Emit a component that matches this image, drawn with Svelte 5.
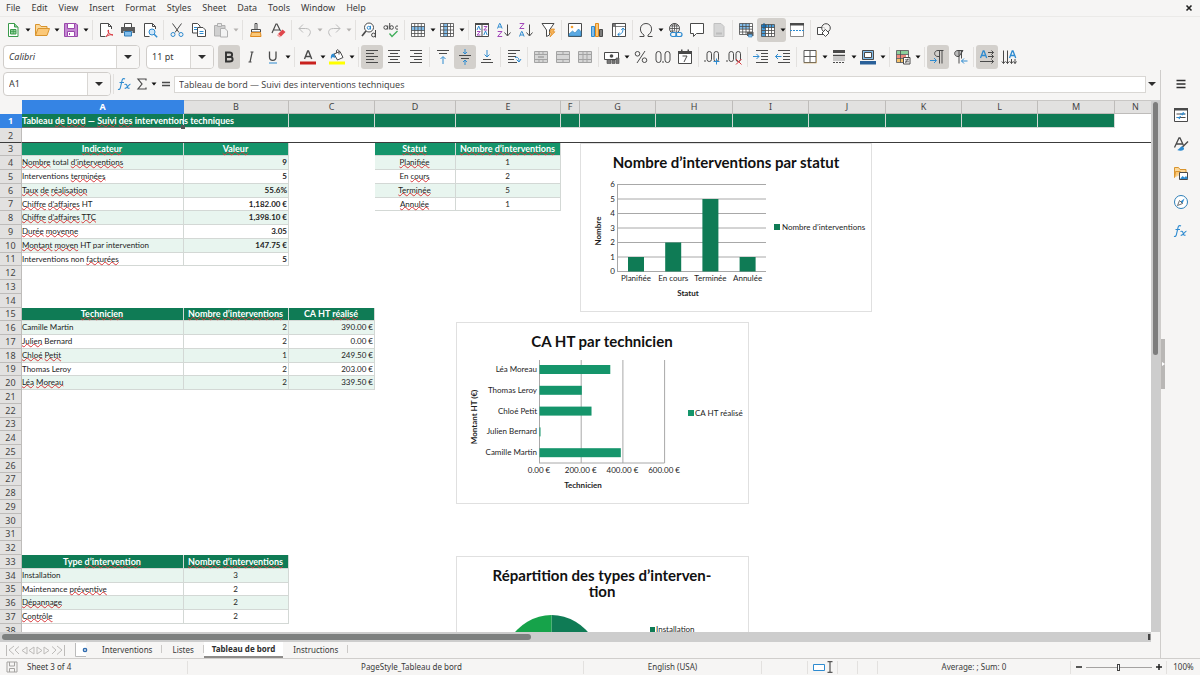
<script>
  const menus = ['File', 'Edit', 'View', 'Insert', 'Format', 'Styles', 'Sheet', 'Data', 'Tools', 'Window', 'Help'];

  const lines = (list) => list.map(([x, y, w]) => `<path d="M${x} ${y}h${w}" stroke="#4a4a4a"/>`).join('');
  const mergeBase = '<path d="M1.5 2.5h13v11h-13z" fill="#d6d6d6" stroke="#a3a3a3"/><path d="M1.5 5.5h13M1.5 10.5h13" stroke="#a3a3a3"/>';

  // inner markup of the 16x16 icons
  const icons = {
    new: '<path d="M3.5 1.5h6l3.500 3.500v9.500h-9.500z" fill="#fff" stroke="#3a9a4b"/><path d="M9.500 1.500v3.500h3.500" fill="#8fd19a" stroke="#3a9a4b"/><path d="M5.500 7.500h5.500v4.500h-5.500z" fill="#8fd19a" stroke="#3a9a4b"/><path d="M5.500 9.500h5.500M8.300 7.500v4.500" stroke="#3a9a4b" stroke-width=".7"/>',
    open: '<path d="M1.500 13.500v-11h4l1.500 2h6v2" fill="#fbd89a" stroke="#d9942d"/><path d="M1.500 13.500l2.500-7h11.500l-2.500 7z" fill="#fbc878" stroke="#d9942d"/>',
    save: '<path d="M1.500 1.500h11.500l1.500 1.500v11.500h-13z" fill="#c589d3" stroke="#9a48ab"/><path d="M4.500 1.500h7v5h-7z" fill="#fff" stroke="#9a48ab"/><path d="M4.500 9.500h7v5h-7z" fill="#fff" stroke="#9a48ab"/><path d="M6.500 11v2" stroke="#9a48ab"/>',
    pdf: '<path d="M13.500 7v-2.500l-3-3h-8v13h5" fill="#fff" stroke="#4a4a4a"/><path d="M10.500 1.500v3h3" fill="none" stroke="#4a4a4a"/><path d="M8 14.500c2-1 3-4.500 2.500-6.500-1.500 0 0 4.500 4.500 5-3-1-5 .5-7 1.500z" fill="none" stroke="#d9363e"/>',
    print: '<path d="M4.500 5v-3.500h7v3.500" fill="#fff" stroke="#4a4a4a"/><path d="M1 5h14v6h-2.500v-2h-9v2h-2.500z" fill="#5b5b5b"/><path d="M4.500 9.500h7v4.500h-7z" fill="#83beec" stroke="#2f7cb8"/>',
    preview: '<path d="M13.500 7v-2.500l-3-3h-8v13h5" fill="#fff" stroke="#4a4a4a"/><path d="M10.500 1.500v3h3" fill="none" stroke="#4a4a4a"/><circle cx="10" cy="10" r="3" fill="#cfe6f8" stroke="#2e8bd0"/><path d="M12.200 12.200l3 3" stroke="#2e8bd0" stroke-width="1.400"/>',
    cut: '<path d="M3.500 1.500l6.500 9M12.500 1.500l-6.500 9" stroke="#4a4a4a" fill="none"/><circle cx="4" cy="12.500" r="2" fill="none" stroke="#2e8bd0"/><circle cx="12" cy="12.500" r="2" fill="none" stroke="#2e8bd0"/>',
    copy: '<path d="M1.500 1.500h5l2.500 2.500v7h-7.500z" fill="#fff" stroke="#4a4a4a"/><path d="M6.500 5.500h5.500l2.500 2.500v6.500h-8z" fill="#fff" stroke="#4a4a4a"/><path d="M3 5.500h3M3 7.500h3M8.500 9.500h4M8.500 11.500h4" stroke="#2e8bd0"/>',
    paste: '<path d="M1.500 3.500h10.500v10.500h-10.500z" fill="#d0d0d0" stroke="#b0b0b0"/><path d="M4.500 1.500h4v3h-4z" fill="#e6e6e6" stroke="#b0b0b0"/><path d="M7.500 6.500h4.500l2.500 2.500v6h-7z" fill="#f3f3f3" stroke="#b0b0b0"/>',
    brush: '<path d="M7 1.500h2v6h-2z" fill="#fff" stroke="#4a4a4a"/><path d="M3.500 7.500h9v2.500h-9z" fill="#fff" stroke="#4a4a4a"/><path d="M3.500 10.500h9l.5 4h-10.500z" fill="#fbc878" stroke="#e08a1e"/>',
    clear: '<path d="M2 11l4-9h1l3.500 7M3.500 8h6" fill="none" stroke="#4a4a4a" stroke-width="1.200"/><path d="M8 12l4.500-4.500 3 2.500-4.500 4.500z" fill="#e0474c"/><path d="M8 12l3 2.800-1.200.7-2.800-2z" fill="#f3a0a2"/>',
    undo: '<path d="M2 6.500h6.500c6 0 6 5 2.500 8M2 6.500l4-4M2 6.500l4 4" fill="none" stroke="#bcbcbc"/>',
    redo: '<path d="M14 6.500h-6.500c-6 0-6 5-2.500 8M14 6.500l-4-4M14 6.500l-4 4" fill="none" stroke="#bcbcbc"/>',
    find: '<circle cx="8" cy="5.500" r="4.500" fill="#fff" stroke="#4a4a4a"/><path d="M5 9l-4 5" stroke="#4a4a4a" stroke-width="1.700"/><circle cx="7.700" cy="5.800" r="1.500" fill="none" stroke="#2e8bd0"/><path d="M9.500 3.800v3.700" stroke="#2e8bd0"/><circle cx="12.500" cy="13" r="1.900" fill="#f6f5f4" stroke="#4a4a4a"/><path d="M14.500 8v7.500" stroke="#4a4a4a"/>',
    spell: '<circle cx="2.700" cy="5.500" r="1.800" fill="none" stroke="#4a4a4a"/><path d="M4.700 3.500v4M6.700 1v6.500M15 4.200c-3.200-1.500-3.200 4.300 0 2.800" fill="none" stroke="#4a4a4a"/><circle cx="8.600" cy="5.500" r="1.800" fill="none" stroke="#4a4a4a"/><path d="M6.500 11.500l2.500 3 5.500-5.500" fill="none" stroke="#3fae59" stroke-width="1.300"/>',
    row: '<path d="M1.500 1.500h13v13h-13z" fill="#fff"/><path d="M1.500 4.500h13v4h-13z" fill="#83beec"/><path d="M1.500 1.500h13v13h-13zM1.500 4.500h13M1.500 8.500h13M1.500 11.500h13M4.700 1.500v13M8 1.500v13M11.300 1.500v13" fill="none" stroke="#4a4a4a" stroke-width=".8"/>',
    col: '<path d="M1.500 1.500h13v13h-13z" fill="#fff"/><path d="M4.700 1.500h4v13h-4z" fill="#83beec"/><path d="M1.500 1.500h13v13h-13zM1.500 4.500h13M1.500 8h13M1.500 11.500h13M4.700 1.500v13M8.500 1.500v13M11.500 1.500v13" fill="none" stroke="#4a4a4a" stroke-width=".8"/>',
    sort: '<path d="M1.500 1.500h13v13h-13z" fill="#fff" stroke="#4a4a4a"/><path d="M1 1h14v2h-14z" fill="#4a4a4a"/><path d="M8 2v12" stroke="#4a4a4a"/><path d="M3 8l1.700-4 1.700 4M9.800 13l1.700-4 1.700 4" fill="none" stroke="#2e8bd0"/><path d="M3 9.500h3.200l-3.200 3.500h3.400M9.800 4.500h3.200l-3.200 3.500h3.400" fill="none" stroke="#a347ba"/>',
    asc: '<path d="M1.500 6.500l2-5h.6l2 5M2.300 5h3" fill="none" stroke="#2e8bd0"/><path d="M1.700 9.500h4.300l-4.300 5h4.500" fill="none" stroke="#a347ba"/><path d="M11.500 2.500v11M8.500 10.500l3 3.500 3-3.500" fill="none" stroke="#4a4a4a"/>',
    desc: '<path d="M1.700 1.500h4.300l-4.300 5h4.500" fill="none" stroke="#a347ba"/><path d="M1.500 14.500l2-5h.6l2 5M2.300 13h3" fill="none" stroke="#2e8bd0"/><path d="M11.500 2.500v11M8.500 10.500l3 3.500 3-3.500" fill="none" stroke="#4a4a4a"/>',
    filter: '<path d="M2 1.500h12l-4.500 6.500v5l-3 1.500v-6.500z" fill="#fff" stroke="#4a4a4a"/><path d="M11 7h3.500l-1.500 2.800h2l-5 5.200 1.500-4h-1.800z" fill="#f7b45a" stroke="#e08a1e" stroke-width=".7"/>',
    image: '<path d="M1.500 1.500h13v13h-13z" fill="#fff" stroke="#4a4a4a"/><path d="M2 14v-2l3.500-3 2.500 2 3.500-4 2.500 2.500v4.500z" fill="#5aa9e3" stroke="#2e7fb8" stroke-width=".6"/><circle cx="5" cy="5" r="1.300" fill="#f59f2f"/>',
    chart: '<path d="M2.500 4.500h3v10h-3z" fill="#83beec" stroke="#2e8bd0"/><path d="M6.500 1.500h3v13h-3z" fill="#fbc878" stroke="#e08a1e"/><path d="M10.500 7.500h3v7h-3z" fill="#7d7d7d" stroke="#4a4a4a"/>',
    pivot: '<path d="M1.500 1.500h13v13h-13z" fill="#fff" stroke="#4a4a4a"/><path d="M4.500 2v12M2 4.500h12" stroke="#4a4a4a" stroke-width=".7"/><path d="M1.800 1.800h2.500v2.500h-2.500z" fill="#777"/><path d="M7 12.500c4 0 5-2.500 5-6M10.300 8l1.700-2 1.800 2M8.700 10.800l-2 1.700 2 1.700" fill="none" stroke="#2e8bd0"/>',
    omega: '<path d="M1.500 14.500h4.500v-1.500c-5.500-3-4.500-11.500 2-11.500s7.500 8.500 2 11.500v1.500h4.500" fill="none" stroke="#4a4a4a"/>',
    link: '<circle cx="7.500" cy="6.500" r="5" fill="#fff" stroke="#4a4a4a"/><ellipse cx="7.500" cy="6.500" rx="2.300" ry="5" fill="none" stroke="#4a4a4a" stroke-width=".8"/><path d="M2.500 6.500h10M3.500 4h8M3.500 9h5M7.500 1.500v7" stroke="#4a4a4a" stroke-width=".8"/><rect x="3.500" y="10.500" width="6" height="4" rx="2" fill="#f6f5f4" stroke="#2e8bd0" stroke-width="1.200"/><rect x="9" y="10.500" width="6" height="4" rx="2" fill="none" stroke="#2e8bd0" stroke-width="1.200"/>',
    comment: '<path d="M1.500 1.500h13v10h-7l-3 3v-3h-3z" fill="#fff" stroke="#4a4a4a"/>',
    header: '<path d="M3 1.500h7l3 3v10h-10z" fill="#d6d6d6" stroke="#c0c0c0"/><path d="M5 11.500h6" stroke="#bdbdbd" stroke-width="2"/>',
    printArea: '<path d="M1.500 1.500h13v11h-13z" fill="#fff"/><path d="M1.500 1.500h10v5.500h-10z" fill="#83beec"/><path d="M1.500 1.500h13v11h-13zM1.500 4.500h13M1.500 7.200h13M1.500 10h13M4.700 1.500v11M8 1.500v11M11.300 1.500v11" fill="none" stroke="#4a4a4a" stroke-width=".8"/><path d="M9 10h6.500v4h-6.500z" fill="#5b5b5b"/><path d="M10.500 12.500h3.500v2.500h-3.500z" fill="#83beec" stroke="#2f7cb8" stroke-width=".6"/>',
    freeze: '<path d="M1.500 2.500h13v12h-13z" fill="#fff"/><path d="M1.500 2.500h13v3h-13zM1.500 2.500h4v12h-4z" fill="#4b9fdc"/><path d="M1.500 2.500h13v12h-13zM1.500 5.500h13M1.500 8.500h13M1.500 11.500h13M5.500 2.500v12M8.500 2.500v12M11.500 2.500v12" fill="none" stroke="#4a4a4a" stroke-width=".8"/><path d="M1 4h6M4 1v6" stroke="#0b5a9a"/>',
    split: '<path d="M1.500 1.500h13v13h-13z" fill="#fff" stroke="#8a8a8a"/><path d="M1 1h14v2.500h-14z" fill="#4a4a4a"/><path d="M1 8.500h14" stroke="#2e8bd0" stroke-dasharray="2 1"/>',
    shapes: '<path d="M1.500 5.500h7v7h-7z" fill="#fff" stroke="#4a4a4a"/><circle cx="10" cy="6" r="4.300" fill="#f6f5f4" fill-opacity=".8" stroke="#4a4a4a"/><path d="M9.500 7.500l3.500 3.500-3.500 3.500-3.500-3.500z" fill="#fff" stroke="#4a4a4a"/>',
    bold: '<path d="M5 3.500h3.500c3.500 0 3.500 4.300 0 4.300 4.200 0 4.200 4.700 0 4.700h-3.500zM5 8h4" fill="none" stroke="#333" stroke-width="1.900"/>',
    italic: '<path d="M7.500 3h3M5.500 13h3M9.200 3l-2.200 10" fill="none" stroke="#4a4a4a" stroke-width="1.200"/>',
    underline: '<path d="M4.500 2.500v5.500c0 4.500 6.500 4.500 6.500 0v-5.500" fill="none" stroke="#4a4a4a" stroke-width="1.300"/><path d="M4 14h8" stroke="#2e8bd0"/>',
    fontColor: '<path d="M4.500 10l3.200-8h.8l3.200 8M5.700 7.500h5" fill="none" stroke="#4a4a4a" stroke-width="1.400"/><path d="M0 12.500h16v3h-16z" fill="#c9211e"/>',
    fill: '<path d="M5 5l6-2.500 3 6-5.500 2.500z" fill="#fff" stroke="#4a4a4a"/><path d="M7.500 4v-2.500c1-1.500 2.500-.5 2.500 1v3" fill="none" stroke="#4a4a4a"/><path d="M5 4.500c-3 0-3.500 3-3 5.500l1.500-2 3 1z" fill="#2e8bd0"/><path d="M0 12.500h16v3h-16z" fill="#ffff00"/>',
    left: lines([[2, 1.5, 12], [2, 4.5, 8], [2, 7.5, 12], [2, 10.5, 8], [2, 13.5, 12]]),
    center: lines([[2, 1.5, 12], [4, 4.5, 8], [2, 7.5, 12], [4, 10.5, 8], [2, 13.5, 12]]),
    right: lines([[2, 1.5, 12], [6, 4.5, 8], [2, 7.5, 12], [6, 10.5, 8], [2, 13.5, 12]]),
    top: lines([[2, 1.5, 12], [4, 4.5, 8]]) + '<path d="M8 15v-7M5.500 10l2.500-2.500 2.500 2.500" fill="none" stroke="#2e8bd0"/>',
    middle: lines([[2, 6.5, 12], [4, 9.5, 8]]) + '<path d="M8 0v4.500M6 3l2 2 2-2M8 16v-4.500M6 13l2-2 2 2" fill="none" stroke="#2e8bd0"/>',
    bottom: lines([[2, 13.5, 12], [4, 10.5, 8]]) + '<path d="M8 1v7M5.500 5.500l2.500 2.500 2.500-2.500" fill="none" stroke="#2e8bd0"/>',
    wrap: lines([[2, 1.5, 12], [2, 4.5, 8], [2, 7.5, 8], [2, 10.5, 6], [2, 13.5, 9]]) + '<path d="M9 8.500c3-1 4 1 4 4M10.500 10.500l2.500 2.500 2-3" fill="none" stroke="#2e8bd0"/>',
    merge: mergeBase + '<path d="M6 2.500v3M10 2.500v3M6 10.500v3M10 10.500v3" stroke="#a3a3a3"/><path d="M5 8h6" stroke="#888"/>',
    mergeCells: mergeBase + '<path d="M8 2.500v3M8 10.500v3" stroke="#a3a3a3"/>',
    unmerge: mergeBase + '<path d="M6 2.500v11M10 2.500v11" stroke="#a3a3a3"/>',
    currency: '<path d="M.5 3.500h14v7h-14z" fill="#fff" stroke="#4a4a4a"/><circle cx="7.500" cy="7" r="1.800" fill="#4a4a4a"/><path d="M3 10.500h4v4h-4zM8 11h3v3.500h-3zM12 9h3v5.500h-3z" fill="#777" stroke="#4a4a4a" stroke-width=".6"/>',
    percent: '<circle cx="4.500" cy="4.800" r="2.300" fill="none" stroke="#4a4a4a"/><circle cx="11.500" cy="11.200" r="2.300" fill="none" stroke="#4a4a4a"/><path d="M12 2l-8 12" stroke="#4a4a4a"/>',
    decimal: '<rect x="1" y="2.500" width="5" height="11" rx="2.500" fill="none" stroke="#4a4a4a"/><rect x="10" y="2.500" width="5" height="11" rx="2.500" fill="none" stroke="#4a4a4a"/><path d="M8 12v2" stroke="#4a4a4a"/>',
    date: '<path d="M1.500 2.500h13v12h-13z" fill="#fff" stroke="#4a4a4a"/><path d="M1 2h14v3h-14zM4 .5h1.500v2h-1.500zM10.500 .5h1.500v2h-1.500z" fill="#4a4a4a"/><path d="M5.500 7h4.500l-3 6" fill="none" stroke="#4a4a4a"/>',
    addDec: '<rect x="3" y="2.500" width="4.500" height="10" rx="2.200" fill="none" stroke="#4a4a4a"/><rect x="10" y="2.500" width="4.500" height="10" rx="2.200" fill="none" stroke="#4a4a4a"/><path d="M1 11v2" stroke="#4a4a4a"/><path d="M12.500 9.500v6M9.500 12.500h6" stroke="#2e8bd0"/>',
    delDec: '<rect x="3" y="2.500" width="4.500" height="10" rx="2.200" fill="none" stroke="#4a4a4a"/><rect x="10" y="2.500" width="4.500" height="10" rx="2.200" fill="none" stroke="#4a4a4a"/><path d="M1 11v2" stroke="#4a4a4a"/><path d="M10 10l5.500 5.500M15.500 10l-5.500 5.500" stroke="#d9363e"/>',
    indent: lines([[3, 1.5, 12], [8, 4.5, 7], [8, 7.5, 7], [8, 10.5, 7], [3, 13.5, 12]]) + '<path d="M0 7.500h6M3.500 5l2.500 2.500-2.500 2.500" fill="none" stroke="#2e8bd0"/>',
    outdent: lines([[3, 1.5, 12], [8, 4.5, 7], [8, 7.5, 7], [8, 10.5, 7], [3, 13.5, 12]]) + '<path d="M.5 7.500h6M3 5l-2.500 2.500 2.500 2.500" fill="none" stroke="#2e8bd0"/>',
    borders: '<path d="M2 1.500h12v12h-12zM8 1.500v12M2 7.500h12" fill="#fff" stroke="#5a5a5a"/><path d="M1.500 14h13v-12.500" fill="none" stroke="#caa25c" stroke-width=".6"/>',
    lineStyle: '<path d="M2 1h12v3h-12z" fill="#4a4a4a"/><path d="M2 6.500h12" stroke="#4a4a4a" stroke-width="1.500"/><path d="M2 9h12M2 11h12" stroke="#9a9a9a"/><path d="M2 13.500h12" stroke="#4a4a4a" stroke-dasharray="2 1"/>',
    lineColor: '<path d="M2.500 1.500h11v9h-11z" fill="#83beec" stroke="#4a4a4a"/><path d="M4.500 3.500h7v5h-7z" fill="#fff" stroke="#4a4a4a"/><path d="M0 12h16v3.500h-16z" fill="#2a6099"/>',
    cond: '<path d="M1.500 1.500h12v12h-12z" fill="#fff" stroke="#4a4a4a" stroke-width=".8"/><path d="M2 2h11v3h-11z" fill="#8ccf9c"/><path d="M2 6h9v3h-9z" fill="#ee8a7e"/><path d="M2 10h6v3h-6z" fill="#f5c26b"/><path d="M5.500 1.500v12M1.500 5.500h12M1.500 9.500h7" stroke="#4a4a4a" stroke-width=".8"/><path d="M8.500 8.500h6.500v6.500h-6.500z" fill="#fff" stroke="#4a4a4a"/><path d="M10 10.800h4M10 12.800h4M13 9.500l-2.500 4.500" stroke="#4a4a4a" stroke-width=".8"/>',
    ltr: '<path d="M13.500 1.500h-5.500c-4.500 0-4.500 6 0 6h1M9.500 1.500v13M12 1.500v13" fill="none" stroke="#4a4a4a"/><path d="M0 11.500h6M4 9l2.500 2.500-2.500 2.500" fill="none" stroke="#2e8bd0"/>',
    rtl: '<path d="M11 1.500h-5c-4.500 0-4.500 6 0 6h1z" fill="#bbb" stroke="#4a4a4a"/><path d="M7 1.500v13M9.500 1.500v8" fill="none" stroke="#4a4a4a"/><path d="M9.500 12h6M12 9.500l-2.500 2.500 2.500 2.500" fill="none" stroke="#2e8bd0"/>',
    textLtr: '<path d="M1.500 9l2.700-7h.8l2.700 7M2.500 6.500h4.200" fill="none" stroke="#2e8bd0" stroke-width="1.300"/><path d="M9 3.500h5.500M9 7.500h5.500M1 12.500h13.500M12.500 1.500l2 2-2 2M12.500 5.500l2 2-2 2M12.500 10.500l2 2-2 2" fill="none" stroke="#4a4a4a"/>',
    textTtb: '<path d="M8.500 9l2.700-7h.8l2.700 7M9.500 6.500h4.200" fill="none" stroke="#2e8bd0" stroke-width="1.300"/><path d="M2.500 1.500v13M6.500 1.500v13M10.500 10v4.500M14 10v4.500M.8 12.500l1.700 2 1.700-2M4.800 12.500l1.700 2 1.700-2M9 12.500l1.500 2 1.500-2M12.500 12.500l1.500 2 1.500-2" fill="none" stroke="#4a4a4a"/>',
    fx: '<path d="M8 3c-1.500-1-2.600 0-3 1.600l-1.600 7c-.4 1.600-1.100 2.200-2.400 1.700M2.500 6.500h4.500" fill="none" stroke="#2e8bd0" stroke-width="1.100"/><path d="M7.500 8.500c1.700-.8 2.200 0 2.600 1.700s1 2.500 2.400 1.700M13.500 8.300c-1.700-.5-3.200 4.600-5.800 4" fill="none" stroke="#2e8bd0" stroke-width="1.100"/>',
    sigma: '<path d="M12 4.500v-1.500h-8l4 5-4 5h8v-1.500" fill="none" stroke="#4a4a4a" stroke-width="1.200"/>',
    equals: '<path d="M4 6.500h8M4 9.500h8" stroke="#4a4a4a" stroke-width="1.500"/>',
    burger: '<path d="M3.500 4.500h9M3.500 8h9M3.500 11.500h9" stroke="#2e2e2e" stroke-width="1.400"/>',
    properties: '<path d="M1.500 1.500h13v13h-13z" fill="#fff" stroke="#4a4a4a"/><path d="M1 1h14v2.500h-14z" fill="#4a4a4a"/><path d="M3.500 7h9M3.500 10.500h9" stroke="#4a4a4a"/><path d="M10.500 5.300l-1.500 3M7.500 9l-1.500 3M7 7h5M4 10.500h3" stroke="#2e8bd0" stroke-width="1.200"/>',
    styles: '<path d="M1.500 11.500l4.500-9.500h1l3.500 7.500M3.500 8h6" fill="none" stroke="#4a4a4a" stroke-width="1.300"/><path d="M15 5.500l-6.500 6.500" stroke="#4a4a4a" stroke-width="1.500"/><path d="M9.500 10.500c-2.500-.5-2.500 2.500-5.500 3.500 4 1.500 7.500.5 7-2z" fill="#2e8bd0"/>',
    gallery: '<path d="M1.500 12.500v-10h4l1.500 2h6v3" fill="#fbd89a" stroke="#d9942d"/><path d="M1.500 12.500l1-6h5" fill="#fbc878" stroke="#d9942d"/><path d="M6.500 7.500h8v7h-8z" fill="#fff" stroke="#4a4a4a"/><path d="M7 14l2.500-3 2 1.500 1.500-1.500 1.500 2v1z" fill="#2e8bd0"/>',
    navigator: '<circle cx="8" cy="8" r="6.500" fill="#fff" stroke="#2e7fb8"/><path d="M11.500 4.500l-2 5-2-2z" fill="#2e8bd0"/><path d="M4.500 11.500l2-5 3 3z" fill="#fff" stroke="#4a4a4a" stroke-width=".8"/>'
  };

  // '|' is a separator; arrow adds the drop-down half of a split button
  const standardBar = [
    { icon: 'new', label: 'New', arrow: true }, { icon: 'open', label: 'Open', arrow: true }, { icon: 'save', label: 'Save', arrow: true }, '|',
    { icon: 'pdf', label: 'Export as PDF' }, { icon: 'print', label: 'Print' }, { icon: 'preview', label: 'Print Preview' }, '|',
    { icon: 'cut', label: 'Cut' }, { icon: 'copy', label: 'Copy' }, { icon: 'paste', label: 'Paste', arrow: true, off: true }, '|',
    { icon: 'brush', label: 'Clone Formatting' }, { icon: 'clear', label: 'Clear Formatting' }, '|',
    { icon: 'undo', label: 'Undo', arrow: true, off: true }, { icon: 'redo', label: 'Redo', arrow: true, off: true }, '|',
    { icon: 'find', label: 'Find and Replace' }, { icon: 'spell', label: 'Spelling' }, '|',
    { icon: 'row', label: 'Row', arrow: true }, { icon: 'col', label: 'Column', arrow: true }, '|',
    { icon: 'sort', label: 'Sort' }, { icon: 'asc', label: 'Sort Ascending' }, { icon: 'desc', label: 'Sort Descending' }, { icon: 'filter', label: 'AutoFilter' }, '|',
    { icon: 'image', label: 'Insert Image' }, { icon: 'chart', label: 'Insert Chart' }, { icon: 'pivot', label: 'Pivot Table' }, '|',
    { icon: 'omega', label: 'Special Character', arrow: true }, { icon: 'link', label: 'Insert Hyperlink' }, { icon: 'comment', label: 'Insert Comment' }, { icon: 'header', label: 'Headers and Footers', off: true }, '|',
    { icon: 'printArea', label: 'Define Print Area' }, { icon: 'freeze', label: 'Freeze Rows and Columns', arrow: true, on: true }, { icon: 'split', label: 'Split Window' }, '|',
    { icon: 'shapes', label: 'Draw Functions' }
  ];

  const formatBar = [
    { icon: 'bold', label: 'Bold', on: true }, { icon: 'italic', label: 'Italic' }, { icon: 'underline', label: 'Underline', arrow: true }, '|',
    { icon: 'fontColor', label: 'Font Color', arrow: true }, { icon: 'fill', label: 'Background Color', arrow: true }, '|',
    { icon: 'left', label: 'Align Left', on: true }, { icon: 'center', label: 'Center Horizontally' }, { icon: 'right', label: 'Align Right' }, '|',
    { icon: 'top', label: 'Align Top' }, { icon: 'middle', label: 'Center Vertically', on: true }, { icon: 'bottom', label: 'Align Bottom' }, '|',
    { icon: 'wrap', label: 'Wrap Text' }, '|',
    { icon: 'merge', label: 'Merge and Center', off: true }, { icon: 'mergeCells', label: 'Merge Cells', off: true }, { icon: 'unmerge', label: 'Unmerge Cells', off: true }, '|',
    { icon: 'currency', label: 'Format as Currency', arrow: true }, { icon: 'percent', label: 'Format as Percent' }, { icon: 'decimal', label: 'Format as Number' }, { icon: 'date', label: 'Format as Date' }, '|',
    { icon: 'addDec', label: 'Add Decimal Place' }, { icon: 'delDec', label: 'Delete Decimal Place' }, '|',
    { icon: 'indent', label: 'Increase Indent' }, { icon: 'outdent', label: 'Decrease Indent' }, '|',
    { icon: 'borders', label: 'Borders', arrow: true }, { icon: 'lineStyle', label: 'Border Style', arrow: true }, { icon: 'lineColor', label: 'Border Color', arrow: true }, '|',
    { icon: 'cond', label: 'Conditional Formatting', arrow: true }, '|',
    { icon: 'ltr', label: 'Left-To-Right', on: true }, { icon: 'rtl', label: 'Right-To-Left' }, '|',
    { icon: 'textLtr', label: 'Text left to right', on: true }, { icon: 'textTtb', label: 'Text top to bottom' }
  ];

  const sidebar = [
    { icon: 'burger', label: 'Sidebar Settings' }, { icon: 'properties', label: 'Properties' }, { icon: 'styles', label: 'Styles' },
    { icon: 'gallery', label: 'Gallery' }, { icon: 'navigator', label: 'Navigator' }, { icon: 'fx', label: 'Functions' }
  ];

  const columns = [
    ['A', 162], ['B', 105], ['C', 86], ['D', 81], ['E', 105], ['F', 19], ['G', 76], ['H', 77],
    ['I', 76], ['J', 77], ['K', 76], ['L', 76], ['M', 77], ['N', 0]
  ];
  const rowNumbers = Array.from({ length: 38 }, (_, i) => i + 1);

  // words in [brackets] get the spell-check wave
  const blocks = [
    {
      row: 3, cols: 'AB', tone: 'mid', align: ['', 'end strong'],
      head: ['[Indicateur]', '[Valeur]'],
      rows: [
        ['[Nombre] total [d’interventions]', '9'],
        ['Interventions [terminées]', '5'],
        ['[Taux] [de] [réalisation]', '55.6%'],
        ['[Chiffre] [d’affaires] HT', '1,182.00 €'],
        ['[Chiffre] [d’affaires] [TTC]', '1,398.10 €'],
        ['[Durée] [moyenne]', '3.05'],
        ['[Montant] [moyen] HT par intervention', '147.75 €'],
        ['Interventions non [facturées]', '5']
      ]
    },
    {
      row: 3, cols: 'DE', tone: 'mid', align: ['mid-text', 'mid-text'],
      head: ['[Statut]', '[Nombre] [d’interventions]'],
      rows: [['[Planifiée]', '1'], ['En [cours]', '2'], ['[Terminée]', '5'], ['[Annulée]', '1']]
    },
    {
      row: 15, cols: 'ABC', tone: 'dark', align: ['', 'end', 'end'],
      head: ['[Technicien]', '[Nombre] [d’interventions]', 'CA HT [réalisé]'],
      rows: [
        ['Camille Martin', '2', '390.00 €'],
        ['[Julien] Bernard', '2', '0.00 €'],
        ['[Chloé] [Petit]', '1', '249.50 €'],
        ['Thomas Leroy', '2', '203.00 €'],
        ['[Léa] [Moreau]', '2', '339.50 €']
      ]
    },
    {
      row: 33, cols: 'AB', tone: 'dark', align: ['', 'mid-text'],
      head: ['Type [d’intervention]', '[Nombre] [d’interventions]'],
      rows: [['Installation', '3'], ['Maintenance [préventive]', '2'], ['[Dépannage]', '2'], ['[Contrôle]', '2']]
    }
  ];

  const cells = {};
  for (const [col] of columns) {
    if (col !== 'N') cells[col + 1] = { text: '', cls: 'filled dark' };
  }
  cells.A1 = { text: 'Tableau [de] [bord] — [Suivi] [des] interventions techniques', cls: 'filled dark current' };
  for (const b of blocks) {
    b.cols.split('').forEach((col, c) => {
      cells[col + b.row] = { text: b.head[c], cls: `filled head ${b.tone}` };
      b.rows.forEach((r, i) => {
        cells[col + (b.row + 1 + i)] = { text: r[c], cls: `filled ${i % 2 ? '' : 'stripe'} ${b.align[c]}` };
      });
    });
  }

  const words = (text) => text.split(/(\[[^\]]+\])/).filter(Boolean);

  const statuts = [['Planifiée', 1], ['En cours', 2], ['Terminée', 5], ['Annulée', 1]];
  const techniciens = [['Léa Moreau', 339.5], ['Thomas Leroy', 203], ['Chloé Petit', 249.5], ['Julien Bernard', 0], ['Camille Martin', 390]];

  const tabs = ['Interventions', 'Listes', 'Tableau de bord', 'Instructions'];
  let activeTab = $state('Tableau de bord');
  let zoom = $state(100);
</script>

{#snippet icon(name)}
  <svg class="icon" viewBox="0 0 16 16" fill="none" aria-hidden="true">{@html icons[name]}</svg>
{/snippet}

{#snippet caret()}
  <svg class="caret" viewBox="0 0 6 4" aria-hidden="true"><path d="M0.500 0.500h5l-2.500 3z" fill="currentColor" /></svg>
{/snippet}

{#snippet bar(items)}
  {#each items as item}
    {#if item === '|'}
      <span class="sep"></span>
    {:else}
      <span class="tool" class:on={item.on} class:split={item.arrow}>
        <button class="tool-btn" aria-label={item.label} disabled={item.off}>{@render icon(item.icon)}</button>
        {#if item.arrow}
          <button class="arrow-btn" aria-label="{item.label} options" disabled={item.off}>{@render caret()}</button>
        {/if}
      </span>
    {/if}
  {/each}
{/snippet}

<div class="window">
  <nav class="menubar">
    {#each menus as menu}
      <button>{menu}</button>
    {/each}
    <button class="close" aria-label="Close document">
      <svg viewBox="0 0 8 8" aria-hidden="true"><path d="M1.500 1.500l5 5M6.500 1.500l-5 5" stroke="#222" stroke-width="1.600" /></svg>
    </button>
  </nav>

  <div class="toolbar">{@render bar(standardBar)}</div>

  <div class="toolbar">
    <div class="combo font-name">
      <input aria-label="Font name" value="Calibri" />
      <button aria-label="Font list"><i></i></button>
    </div>
    <div class="combo font-size">
      <input aria-label="Font size" value="11 pt" />
      <button aria-label="Size list"><i></i></button>
    </div>
    {@render bar(formatBar)}
  </div>

  <div class="body">
    <div class="editor">
      <div class="formula">
        <div class="combo name-box">
          <input aria-label="Name box" value="A1" />
          <button aria-label="Named ranges"><i></i></button>
        </div>
        <span class="sep"></span>
        <button class="fn" aria-label="Function Wizard">{@render icon('fx')}</button>
        <button class="fn" aria-label="Sum">{@render icon('sigma')}</button>
        <button class="arrow-btn" aria-label="Select Function">{@render caret()}</button>
        <button class="fn" aria-label="Formula">{@render icon('equals')}</button>
        <input class="formula-input" aria-label="Input line" value="Tableau de bord — Suivi des interventions techniques" />
        <button class="expand" aria-label="Expand formula bar"><i></i></button>
      </div>

      <div class="sheet-row">
        <div class="sheet">
          <table>
            <colgroup>
              <col style="width: 22px" />
              {#each columns as [name, width]}
                <col style={width ? `width: ${width}px` : ''} />
              {/each}
            </colgroup>
            <thead>
              <tr>
                <td class="corner"></td>
                {#each columns as [name]}
                  <th scope="col" class:selected={name === 'A'}>{name}</th>
                {/each}
              </tr>
            </thead>
            <tbody>
              {#each rowNumbers as n}
                <tr class:short={n % 4 === 3} class:frozen={n === 2}>
                  <th scope="row" class:selected={n === 1}>{n}</th>
                  {#each columns as [name]}
                    {@const cell = cells[name + n]}
                    <td class={cell?.cls}>{#if cell}{#each words(cell.text) as w}{#if w[0] === '['}<span class="wave">{w.slice(1, -1)}</span>{:else}{w}{/if}{/each}{/if}{#if name + n === 'A1'}<span class="cursor"></span>{/if}</td>
                  {/each}
                </tr>
              {/each}
            </tbody>
          </table>

          <svg class="chart by-status" viewBox="0 0 292 169">
            <text class="title" x="146" y="25">Nombre d’interventions par statut</text>
            {#each [0, 1, 2, 3, 4, 5, 6] as v}
              <path class="grid" d="M37 {128.5 - v * 14.5}h149" />
              <text class="right-text" x="35" y={131 - v * 14.5}>{v}</text>
            {/each}
            <path class="grid" d="M37.500 41.500v87" />
            {#each statuts as [name, count], i}
              <rect x={48 + i * 37.2} y={128.5 - count * 14.5} width="16" height={count * 14.5} fill="#0f7b55" />
              <text class="middle" x={56 + i * 37.2} y="138">{name}</text>
            {/each}
            <text class="axis" x="108" y="153">Statut</text>
            <text class="axis" transform="translate(21 88) rotate(-90)">Nombre</text>
            <rect x="194" y="81" width="6" height="6" fill="#0f7b55" />
            <text x="202" y="87">Nombre d’interventions</text>
          </svg>

          <svg class="chart by-tech" viewBox="0 0 293 182">
            <text class="title" x="146" y="25">CA HT par technicien</text>
            {#each ['0.00 €', '200.00 €', '400.00 €', '600.00 €'] as label, i}
              <path class="grid" d="M{83.5 + i * 41.7} 38v103" />
              <text class="middle" x={83 + i * 41.7} y="151">{label}</text>
            {/each}
            <path class="grid" d="M83 141h125.500" />
            {#each techniciens as [name, amount], i}
              <rect x="83.500" y={43 + i * 20.8} width={Math.max(amount * 0.2085, 1)} height="9" fill="#15956b" />
              <text class="right-text" x="81" y={50 + i * 20.8}>{name}</text>
            {/each}
            <text class="axis" x="127" y="166">Technicien</text>
            <text class="axis" transform="translate(21 95) rotate(-90)">Montant HT (€)</text>
            <rect x="232" y="88" width="6" height="6" fill="#15956b" />
            <text x="239" y="94">CA HT réalisé</text>
          </svg>

          <svg class="chart by-type" viewBox="0 0 293 182">
            <text class="title" x="146" y="25">Répartition des types d’interven-</text>
            <text class="title" x="146" y="41">tion</text>
            <path d="M95.500 108v-49a49 49 0 0 1 42 73z" fill="#0f7b55" />
            <path d="M95.500 108v-49a49 49 0 0 0-42 73z" fill="#16a34a" />
            <rect x="194" y="71" width="5" height="5" fill="#0f7b55" />
            <text x="200" y="76">Installation</text>
          </svg>
        </div>
        <div class="vscroll"><div class="thumb"></div></div>
      </div>

      <div class="hscroll"><div class="thumb"></div><span class="grip"></span></div>

      <div class="tabbar">
        <svg class="tab-nav" viewBox="0 0 60 12" fill="none" stroke="#bdbbb9" aria-hidden="true">
          <path d="M.5 1v11M8 2l-5 4 5 4.500M13 2.500l-4 3.500 4 4M21 3l-5 3.500 5 3.500zM28 3l-5 3.500 5 3.500zM31 3l5 3.500-5 3.500zM38 3l5 3.500-5 3.500zM46 2.500l4 3.500-4 4M51 2l5 4-5 4.500M58.500 1v11" />
        </svg>
        <button class="add" aria-label="Add sheet">
          <svg viewBox="0 0 14 14" aria-hidden="true"><path d="M.5 0v13.500h10.500" fill="#fff" stroke="#bbb" /><path d="M1 0h10v13h-10z" fill="#fff" /><circle cx="10" cy="7" r="2.300" fill="#1e5fa8" /><path d="M8.800 7h2.400M10 5.800v2.400" stroke="#fff" stroke-width=".8" /></svg>
        </button>
        {#each tabs as tab}
          <button class="tab" class:active={tab === activeTab} onclick={() => (activeTab = tab)}>{tab}</button>
        {/each}
      </div>
    </div>

    <aside class="sidebar">
      <span class="handle"></span>
      {#each sidebar as item}
        <button aria-label={item.label}>{@render icon(item.icon)}</button>
      {/each}
    </aside>
  </div>

  <footer class="status">
    <span class="doc">
      <svg viewBox="0 0 12 12" fill="none" stroke="#a5a3a1" aria-hidden="true"><path d="M1 1h10v10h-10zM3.500 1v4h5v-4M3.500 11v-3.500h5v3.500" /></svg>
      Sheet 3 of 4
    </span>
    <span class="page-style">PageStyle_Tableau de bord</span>
    <span class="lang">English (USA)</span>
    <span class="selection"></span>
    <span class="modes">
      <svg viewBox="0 0 20 12" fill="none" aria-hidden="true"><path d="M.5 3.500h11v6h-11z" stroke="#2e8bd0" fill="#fff" /><path d="M17 1v10M14.500 .7h5M14.500 11.300h5" stroke="#333" /></svg>
    </span>
    <span class="slot"></span>
    <span class="slot"></span>
    <span class="sum">Average: ; Sum: 0</span>
    <span class="zoom">
      <button aria-label="Zoom out"><svg viewBox="0 0 8 8" aria-hidden="true"><path d="M1 4h6" stroke="#222" stroke-width="1.500" /></svg></button>
      <input type="range" min="0" max="200" aria-label="Zoom" bind:value={zoom} />
      <button aria-label="Zoom in"><svg viewBox="0 0 8 8" aria-hidden="true"><path d="M1 4h6M4 1v6" stroke="#222" stroke-width="1.500" /></svg></button>
    </span>
    <span class="percent">{zoom}%</span>
  </footer>
</div>

<style>
  :global(body) {
    background: #f6f5f4;
  }

  * {
    box-sizing: border-box;
  }

  .window {
    display: flex;
    flex-direction: column;
    height: 100vh;
    overflow: hidden;
    background: #f6f5f4;
    color: #3a3a3a;
    font: 9px/12px 'Noto Sans', sans-serif;
  }

  button,
  input {
    margin: 0;
    padding: 0;
    border: 0;
    background: none;
    color: inherit;
    font: inherit;
  }

  button {
    display: flex;
    align-items: center;
    justify-content: center;
    flex: none;
  }

  input {
    min-width: 0;
    outline: none;
  }

  .icon {
    width: 16px;
    height: 16px;
    display: block;
  }

  .caret {
    width: 6px;
    height: 4px;
    color: #111;
  }

  :disabled .caret {
    color: #b5b3b1;
  }

  .menubar {
    display: flex;
    flex: none;
    height: 17px;
    padding: 0 7px 0 6px;
    gap: 11px;
    border-bottom: 1px solid #ebeae8;
  }

  .close {
    margin-left: auto;
  }

  .close svg {
    width: 8px;
    height: 8px;
  }

  .toolbar {
    display: flex;
    flex: none;
    align-items: center;
    height: 27px;
    padding: 0 2px;
  }

  .menubar + .toolbar {
    height: 26px;
  }

  .tool {
    display: flex;
    height: 24px;
    border-radius: 3px;
  }

  .tool.on {
    background: #d3d0cc;
  }

  .tool-btn {
    width: 22px;
  }

  .arrow-btn {
    width: 7px;
  }

  .sep {
    flex: none;
    width: 1px;
    height: 20px;
    margin: 0 2px;
    background: #e3e1df;
  }

  .split + .sep {
    margin-left: 3px;
  }

  .combo {
    display: flex;
    flex: none;
    height: 24px;
    border: 1px solid #d0cdca;
    border-radius: 4px;
    background: #fff;
    overflow: hidden;
  }

  .combo input {
    flex: 1;
    padding-left: 5px;
  }

  .combo button {
    width: 23px;
    border-left: 1px solid #d9d7d4;
    background: #f8f7f6;
  }

  .combo i,
  .expand i {
    border: 4px solid transparent;
    border-top-color: #2e2e2e;
    border-bottom: 0;
  }

  .font-name {
    width: 137px;
    margin: 0 6px 0 1px;
    font-style: italic;
  }

  .font-size {
    width: 68px;
    margin-right: 4px;
  }

  .name-box {
    width: 108px;
  }

  .body {
    display: flex;
    flex: 1;
    min-height: 0;
  }

  .editor {
    display: flex;
    flex-direction: column;
    flex: 1;
    min-width: 0;
    border-right: 1px solid #cfcdcb;
  }

  .formula {
    display: flex;
    flex: none;
    align-items: center;
    height: 30px;
    padding: 0 2px 2px 3px;
  }

  .fn {
    width: 17px;
    height: 20px;
  }

  .formula-input {
    flex: 1;
    height: 17px;
    padding-left: 4px;
    border: 1px solid #d9d7d4;
    background: #fff;
    font-family: 'Open Sans', sans-serif;
  }

  .expand {
    width: 12px;
    height: 20px;
  }

  .sheet-row {
    display: flex;
    flex: 1;
    min-height: 0;
  }

  .sheet {
    position: relative;
    flex: 1;
    min-width: 0;
    overflow: hidden;
    background: #fff;
  }

  table {
    width: calc(100% + 6px);
    table-layout: fixed;
    border-spacing: 0;
  }

  tr {
    height: 14px;
  }

  th,
  td {
    height: 14px;
    padding: 0;
    line-height: 13px;
    white-space: nowrap;
  }

  .short th,
  .short td {
    height: 13px;
    line-height: 12px;
  }

  .short {
    height: 13px;
  }

  .frozen th,
  .frozen td {
    height: 15px;
    border-bottom: 1px solid #3c3c3c;
  }

  th {
    border-right: 1px solid #bebcba;
    border-bottom: 1px solid #bebcba;
    background: #e2e1e0;
    color: #444;
    font-weight: normal;
    text-align: center;
  }

  thead th {
    border-top: 1px solid #c9c7c5;
    line-height: 12px;
  }

  .corner {
    background: #f6f5f4;
  }

  th.selected {
    border-color: #3584e4;
    background: #3584e4;
    color: #fff;
    font-weight: bold;
  }

  td {
    color: #1d1d1d;
    font-family: Lato, sans-serif;
    font-size: 8px;
  }

  .filled {
    padding-right: 1px;
    border-right: 1px solid #d3d8d5;
    border-bottom: 1px solid #d3d8d5;
  }

  .stripe {
    background: #e8f5ef;
  }

  .dark {
    background: #0f7b55;
    color: #fff;
  }

  .mid {
    background: #15956b;
    color: #fff;
  }

  .head,
  .current {
    font-size: 9px;
    font-weight: bold;
  }

  .head {
    text-align: center;
  }

  .strong {
    font-weight: bold;
  }

  .end {
    text-align: right;
  }

  .mid-text {
    text-align: center;
  }

  .wave {
    text-decoration: underline wavy #d8383a 1px;
    text-decoration-skip-ink: none;
    text-underline-offset: -1px;
  }

  .current {
    position: relative;
  }

  .cursor {
    position: absolute;
    inset: 0 0 -1px;
    border-bottom: 1px solid #6f6f6f;
  }

  .cursor::after {
    content: '';
    position: absolute;
    right: -2px;
    bottom: -2px;
    width: 4px;
    height: 4px;
    background: #555;
  }

  .chart {
    position: absolute;
    outline: 1px solid #e0e0e0;
    outline-offset: -1px;
    background: #fff;
    overflow: hidden;
    font: 8px Lato, sans-serif;
    fill: #1d1d1d;
  }

  .by-status {
    top: 43px;
    left: 580px;
    width: 292px;
    height: 169px;
  }

  .by-tech {
    top: 222px;
    left: 456px;
    width: 293px;
    height: 182px;
  }

  .by-type {
    top: 456px;
    left: 456px;
    width: 293px;
    height: 182px;
  }

  .chart .title {
    font-size: 15px;
    font-weight: bold;
    text-anchor: middle;
    fill: #111;
  }

  .chart .axis {
    font-weight: bold;
    text-anchor: middle;
  }

  .chart .middle {
    text-anchor: middle;
  }

  .chart .right-text {
    text-anchor: end;
  }

  .chart .grid {
    stroke: #a8a8a8;
  }

  .vscroll {
    flex: none;
    width: 9px;
    padding: 2px;
    background: #cdcdcd;
  }

  .vscroll .thumb {
    width: 5px;
    height: 48%;
    border-radius: 3px;
    background: #7d7d7d;
  }

  .hscroll {
    display: flex;
    flex: none;
    align-items: center;
    justify-content: space-between;
    height: 10px;
    margin-right: 9px;
    padding-left: 2px;
    background: #cdcdcd;
  }

  .hscroll .thumb {
    width: 46%;
    height: 6px;
    border-radius: 3px;
    background: #7d807f;
  }

  .grip {
    width: 3px;
    height: 6px;
    border-right: 1px solid #9a9a9a;
    background: #444;
  }

  .tabbar {
    display: flex;
    flex: none;
    align-items: stretch;
    height: 16px;
    padding-left: 6px;
    font-size: 8px;
  }

  .tab-nav {
    width: 60px;
    height: 12px;
    margin: 2px 8px 0 0;
  }

  .add {
    width: 16px;
    margin-right: 2px;
  }

  .add svg {
    width: 14px;
    height: 14px;
  }

  .tab {
    position: relative;
    padding: 0 10px;
  }

  .tab::after {
    content: '';
    position: absolute;
    top: 3px;
    right: 0;
    width: 1px;
    height: 8px;
    background: #cbc9c7;
  }

  .tab.active {
    padding: 0 8px;
    background: #fff;
    border-bottom: 2px solid #8d8b89;
    font-weight: bold;
    color: #2e2e2e;
  }

  .tab.active::after {
    display: none;
  }

  .sidebar {
    position: relative;
    display: flex;
    flex-direction: column;
    align-items: center;
    flex: none;
    width: 39px;
    padding-top: 2px;
    gap: 5px;
  }

  .sidebar button {
    width: 24px;
    height: 24px;
  }

  .sidebar button:first-of-type {
    margin-bottom: 2px;
  }

  .handle {
    position: absolute;
    top: 269px;
    left: 0;
    width: 4px;
    height: 50px;
    background: #b9b7b5;
  }

  .handle::after {
    content: '';
    position: absolute;
    top: 23px;
    left: 1px;
    border: 2px solid transparent;
    border-left: 3px solid #fff;
    border-right: 0;
  }

  .status {
    display: flex;
    flex: none;
    align-items: center;
    height: 17px;
    border-top: 1px solid #d0cecc;
    font-size: 8px;
  }

  .status > span {
    display: flex;
    align-items: center;
    justify-content: center;
    height: 13px;
    border-right: 1px solid #e3e1df;
  }

  .status .doc {
    flex: 181;
    justify-content: flex-start;
    padding-left: 6px;
    gap: 9px;
  }

  .doc svg {
    width: 12px;
    height: 12px;
  }

  .status .page-style {
    flex: 343;
    padding-left: 52px;
  }

  .status .lang {
    flex: 177;
  }

  .status .selection {
    width: 46px;
  }

  .modes svg {
    width: 20px;
    height: 12px;
  }

  .status .modes {
    width: 30px;
  }

  .status .slot {
    width: 20px;
  }

  .status .sum {
    flex: 192;
  }

  .status .zoom {
    width: 96px;
    gap: 3px;
  }

  .zoom svg {
    width: 8px;
    height: 8px;
  }

  .zoom input {
    width: 66px;
    height: 8px;
    appearance: none;
    background: linear-gradient(#a5a3a1, #a5a3a1) center / 100% 1px no-repeat;
  }

  .zoom input::-webkit-slider-thumb {
    appearance: none;
    width: 3px;
    height: 7px;
    border: 1px solid #444;
    background: #fff;
  }

  .status .percent {
    width: 33px;
    border-right: 0;
  }
</style>
